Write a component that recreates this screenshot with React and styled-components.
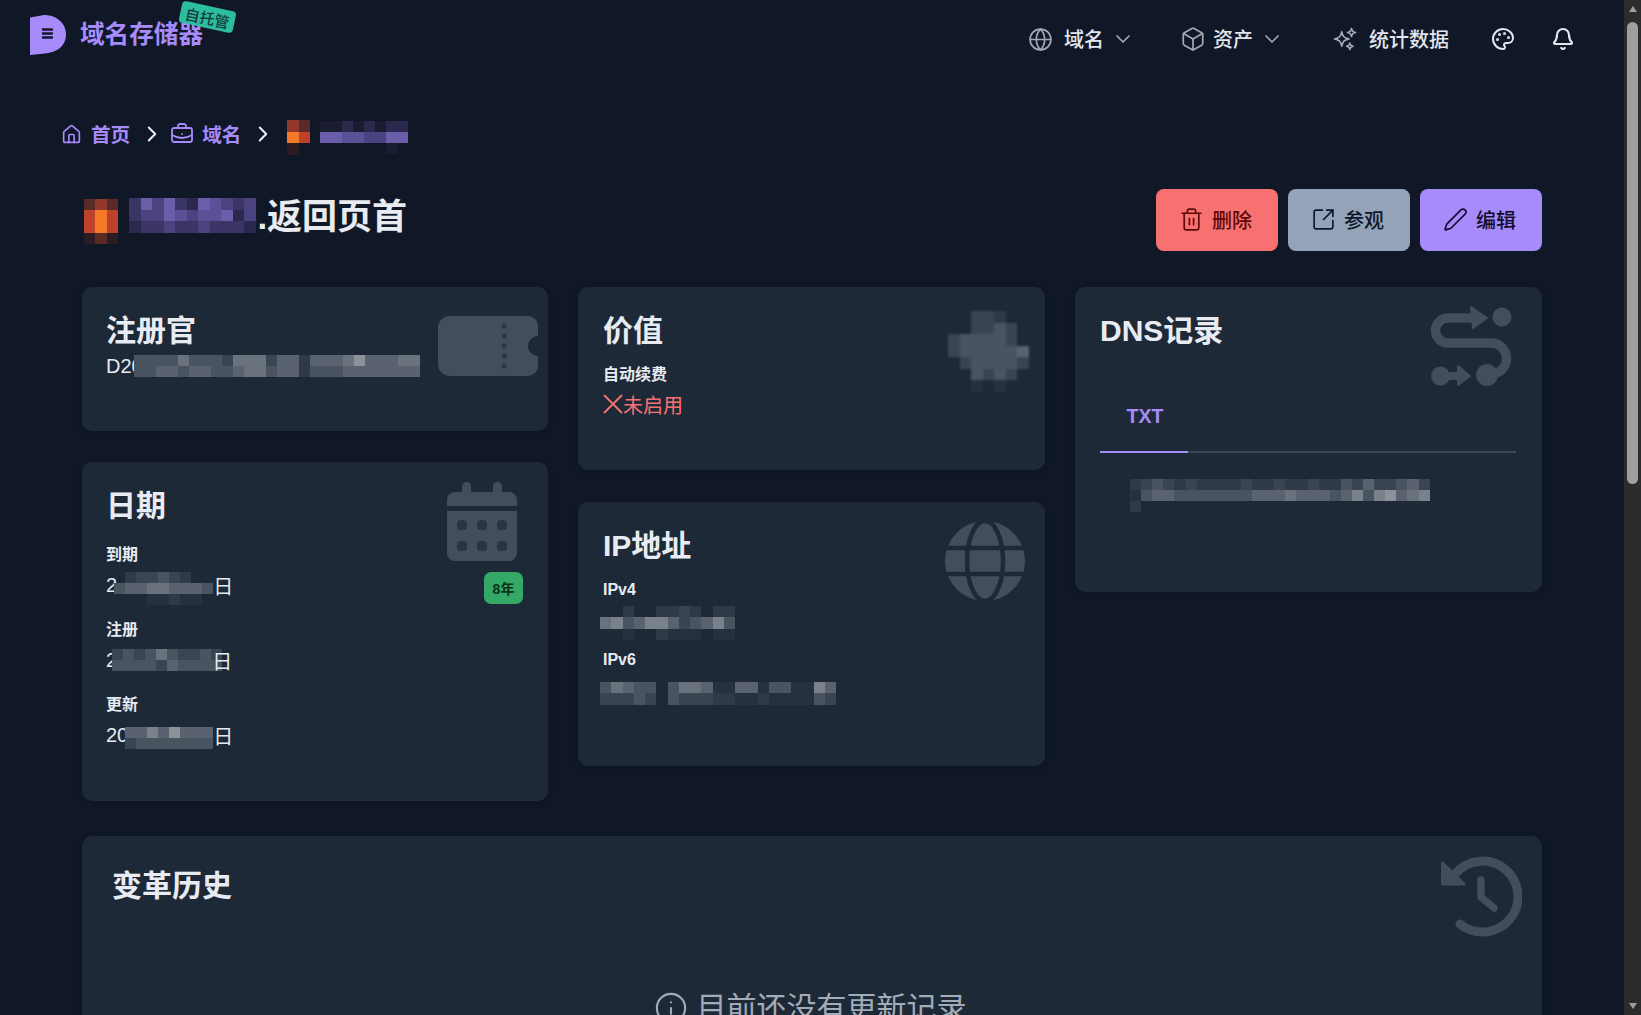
import React from "react";
import styled, { createGlobalStyle } from "styled-components";
import { Globe, ChevronDown, Box, Palette, Bell, House, ChevronRight, BriefcaseBusiness, Trash2, SquareArrowOutUpRight, Pen, X, Info } from "lucide-react";
import { HiOutlineSparkles } from "react-icons/hi2";

const FONT = `"Liberation Sans", "Noto Sans CJK SC", sans-serif`;
const BG = "#101726";
const CARD = "#1e2937";
const ICON = "#434d5b";

const Global = createGlobalStyle`
  html, body { margin: 0; padding: 0; height: 100%; overflow: hidden; background: ${BG}; }
  #root { height: 100%; }
  * { box-sizing: border-box; }
`;

const Page = styled.div`
  display: flex; width: 100%; height: 1015px; overflow: hidden;
  font-family: ${FONT}; color: #e5e9f0; background: ${BG};
`;
const Main = styled.main`
  flex: 1; min-width: 0; height: 100%; overflow: hidden; padding: 0 82px;
`;

/* scrollbar */
const ScrollTrack = styled.div`
  flex: none; width: 17px; height: 100%; background: #2c2c2c;
  display: flex; flex-direction: column; align-items: center; padding: 6px 0;
`;
const ArrowUp = styled.div`
  width: 0; height: 0; border-left: 4.5px solid transparent; border-right: 4.5px solid transparent;
  border-bottom: 6px solid #9f9f9f;
`;
const ArrowDown = styled.div`
  width: 0; height: 0; border-left: 4.5px solid transparent; border-right: 4.5px solid transparent;
  border-top: 6px solid #9f9f9f; margin-top: auto;
`;
const Thumb = styled.div`
  width: 11px; height: 462px; margin-top: 10px; border-radius: 6px; background: #9f9f9f;
`;

/* header */
const Header = styled.header`
  display: flex; align-items: center; justify-content: space-between;
  height: 78px; margin: 0 -33px 0 -52px;
`;
const Brand = styled.div`
  position: relative; display: flex; align-items: center; gap: 14px; align-self: flex-start; margin-top: 15px;
`;
const BrandName = styled.span`
  font-size: 24.6px; font-weight: 700; color: #a78bfa; line-height: 40px;
`;
const HostBadge = styled.span`
  position: absolute; left: 150px; top: -9px; width: 55px; height: 22px;
  display: flex; align-items: center; justify-content: center;
  background: #2bbd9e; color: #173b3b; font-size: 15px; font-weight: 500;
  border-radius: 4px; transform: rotate(12deg);
`;
const Nav = styled.nav`
  display: flex; align-items: center; font-size: 20px; color: #e2e6ee; font-weight: 500;
`;
const NavItem = styled.div`
  display: flex; align-items: center; gap: 7px; margin-left: ${(p) => p.$ml || 0}px;
  svg.lead { color: #a2a8b4; }
`;
const NavText = styled.span`
  margin-left: ${(p) => p.$ml || 0}px; margin-top: -1px;
`;

/* breadcrumb */
const Crumbs = styled.div`
  display: flex; align-items: center; height: 32px; margin: 40px 0 0 -21px;
  font-size: 19.6px; font-weight: 600; color: #a78bfa;
`;
const Crumb = styled.span`
  display: flex; align-items: center; gap: ${(p) => p.$gap}px;
`;
const CrumbText = styled.span`
  margin-top: -2px;
`;
const Sep = styled(ChevronRight)`
  color: #eef0f4; margin: 0 ${(p) => p.$mr}px 0 9px; flex: none;
`;

/* title */
const TitleRow = styled.div`
  display: flex; align-items: flex-start; justify-content: space-between; height: 62px; margin-top: 39px;
`;
const Title = styled.h1`
  margin: 0; display: flex; align-items: center; height: 48px; padding-left: 2px;
  font-size: 35px; font-weight: 700; color: #e8ebef;
`;
const Actions = styled.div`
  display: flex; gap: 10px;
`;
const Action = styled.button`
  width: 122px; height: 62px; border: 0; border-radius: 8px; padding: 0 3px 1px 0;
  display: flex; align-items: center; justify-content: center; gap: 8px;
  font-family: ${FONT}; font-size: 20px; font-weight: 500;
  background: ${(p) => p.$bg}; color: ${(p) => p.$fg};
`;

/* cards */
const Columns = styled.div`
  display: grid; grid-template-columns: 466px 467px 1fr; column-gap: 30px; align-items: start;
  margin-top: 36px; margin-bottom: 35px;
`;
const Column = styled.div`
  display: flex; flex-direction: column; gap: ${(p) => p.$gap}px;
`;
const Card = styled.section`
  position: relative; height: ${(p) => p.$h}px; padding: 26px 26px 26px ${(p) => p.$pl || 24}px;
  background: ${CARD}; border-radius: 10px; overflow: hidden;
  box-shadow: 0 2px 6px rgba(0,0,0,.12);
`;
const WideCard = styled(Card)`
  height: 400px; padding: 32px 30px;
`;
const CardTitle = styled.h2`
  margin: 0 0 ${(p) => p.$mb || 0}px; font-size: 30px; line-height: 36px; font-weight: 700; color: #e8ecf2;
`;
const Mark = styled.div`
  position: absolute; top: ${(p) => p.$top}px; right: ${(p) => p.$right}px; line-height: 0;
`;
const Label = styled.div`
  font-size: 16px; line-height: 24px; font-weight: 700; color: #e8ecf2; margin-bottom: ${(p) => p.$mb ?? 7}px;
`;
const Value = styled.div`
  display: flex; align-items: center; height: 28px; font-size: 20px; color: #e5e9f0;
  margin-top: ${(p) => p.$mt || 0}px; white-space: nowrap;
`;
const Field = styled.div`
  margin-bottom: ${(p) => p.$mb}px;
`;
const Off = styled(Value)`
  color: #f87171;
`;
const OffMark = styled(X)`
  flex: none; margin: -9px -7px -9px -7px;
`;
const YearBadge = styled.span`
  position: absolute; top: 110px; right: 25px; width: 39px; height: 32px;
  display: flex; align-items: center; justify-content: center;
  background: #34a866; color: #0d3319; border-radius: 7px; font-size: 14px; font-weight: 700;
`;
const Tabs = styled.div`
  display: flex; height: 57px; margin-top: 47px; border-bottom: 2px solid #3c4656;
`;
const Tab = styled.div`
  width: 88px; height: 57px; padding-left: 2px; display: flex; align-items: flex-start; justify-content: center;
  font-size: 19.5px; line-height: 40px; font-weight: 700; color: #a78bfa; border-bottom: 2px solid #a78bfa;
`;
const TabPanel = styled.div`
  margin: 26px 0 0 30px;
`;
const Empty = styled.div`
  display: flex; align-items: center; justify-content: center; gap: 9px; margin-top: 87px; padding-right: 4px;
  font-size: 30px; line-height: 30px; color: #a2abb8;
`;

/* mosaic */
const GRAY = { 1: "#263140", 2: "#2f3a48", 3: "#3a4553", 4: "#4a5461", 5: "#59626e", 6: "#69727d", 7: "#79818a", 8: "#8b9299", 9: "#9da3a9" };
const PURPLE = { 1: "#1a1c32", 2: "#2a284c", 3: "#3a3565", 4: "#4b4380", 5: "#5b5196", 6: "#6a5eab", 7: "#7869bf" };
const HOT = { a: "#2a1c22", b: "#5a2a26", c: "#92382a", d: "#bd4229", e: "#f4792a", f: "#f99a2e" };

const MosaicSvg = styled.svg`
  display: block; flex: none; overflow: visible;
  margin: ${(p) => p.$margin || 0};
  filter: ${(p) => (p.$soft ? "blur(1px)" : "none")};
`;
function Mosaic({ rows, cell = 11, palette = GRAY, margin, soft }) {
  const cols = Math.max(...rows.map((r) => r.length));
  return (
    <MosaicSvg $margin={margin} $soft={soft} width={cols * cell} height={rows.length * cell} viewBox={`0 0 ${cols * cell} ${rows.length * cell}`} shapeRendering="crispEdges">
      {rows.map((r, y) =>
        r.split("").map((c, x) =>
          palette[c] ? <rect key={`${x}-${y}`} x={x * cell} y={y * cell} width={cell} height={cell} fill={palette[c]} /> : null
        )
      )}
    </MosaicSvg>
  );
}

/* drawn marks */
const LogoMark = () => (
  <svg width="36" height="40" viewBox="0 0 36 40">
    <path d="M0 2.5 L14 0 C27 0 36 8.5 36 19.5 C36 31 27 37.5 15 38.5 L0 40 Z" fill="#a78bfa" />
    <path d="M13 14.5 H22 M13 18.5 H22 M13 22.5 H22" stroke="#15182c" strokeWidth="2.4" strokeLinecap="round" />
  </svg>
);
const TicketMark = () => (
  <svg width="100" height="60" viewBox="0 0 100 60">
    <path d="M12 0 H90 a10 10 0 0 1 10 10 V20 a10 10 0 0 0 0 20 V50 a10 10 0 0 1 -10 10 H12 a12 12 0 0 1 -12 -12 V12 a12 12 0 0 1 12 -12 Z" fill={ICON} />
    {[10, 20, 30, 40, 50].map((y) => (
      <rect key={y} x="64" y={y - 2.5} width="4.5" height="5" rx="1" fill="#2b3645" />
    ))}
  </svg>
);
const CalendarMark = () => (
  <svg width="70" height="79" viewBox="0 0 70 79">
    <rect x="15" y="0" width="9" height="16" rx="4.5" fill={ICON} />
    <rect x="46" y="0" width="9" height="16" rx="4.5" fill={ICON} />
    <path d="M8 10 H62 a8 8 0 0 1 8 8 V24 H0 V18 a8 8 0 0 1 8 -8 Z" fill={ICON} />
    <path d="M0 29 H70 V71 a8 8 0 0 1 -8 8 H8 a8 8 0 0 1 -8 -8 Z" fill={ICON} />
    {[15, 35, 55].flatMap((x) =>
      [43, 64].map((y) => <rect key={`${x}-${y}`} x={x - 5} y={y - 5} width="10" height="10" rx="3.5" fill="#2a3543" />)
    )}
  </svg>
);
const GlobeMark = () => (
  <svg width="80" height="80" viewBox="0 0 80 80">
    <circle cx="40" cy="40" r="40" fill={ICON} />
    <ellipse cx="40" cy="40" rx="18" ry="40" fill="none" stroke={CARD} strokeWidth="4.5" />
    <path d="M0 27 H80 M0 53 H80" stroke={CARD} strokeWidth="4.5" />
  </svg>
);
const RouteMark = () => (
  <svg width="81" height="81" viewBox="0 0 81 81">
    <path d="M44 12 H17 a12.5 12.5 0 0 0 0 25 H60 a15 15 0 0 1 0 31" fill="none" stroke={ICON} strokeWidth="9.5" />
    <path d="M40 1 L56 12 L42 22 Z" fill={ICON} stroke={ICON} strokeWidth="2" strokeLinejoin="round" />
    <circle cx="71" cy="11" r="9.5" fill={ICON} />
    <circle cx="9.5" cy="70" r="9.5" fill={ICON} />
    <path d="M12 70 H30" stroke={ICON} strokeWidth="8" />
    <path d="M27 60 L39 70 L27 79 Z" fill={ICON} stroke={ICON} strokeWidth="2" strokeLinejoin="round" />
    <circle cx="56" cy="69" r="11" fill={ICON} />
  </svg>
);
const HistoryMark = () => (
  <svg width="81" height="81" viewBox="0 0 81 81">
    <path d="M19 68 A35.5 35.5 0 1 0 15 17" fill="none" stroke={ICON} strokeWidth="9" strokeLinecap="round" />
    <path d="M1.5 7 V28 H23 Z" fill={ICON} stroke={ICON} strokeWidth="3" strokeLinejoin="round" />
    <path d="M40 24 V41 L53 52" fill="none" stroke={ICON} strokeWidth="7.5" strokeLinecap="round" strokeLinejoin="round" />
  </svg>
);

export default function App() {
  return (
    <Page>
      <Global />
      <Main>
        <Header>
          <Brand>
            <LogoMark />
            <BrandName>域名存储器</BrandName>
            <HostBadge>自托管</HostBadge>
          </Brand>
          <Nav>
            <NavItem>
              <Globe className="lead" size={25} strokeWidth={1.6} />
              <NavText $ml={4}>域名</NavText>
              <ChevronDown className="lead" size={24} strokeWidth={1.7} />
            </NavItem>
            <NavItem $ml={45}>
              <Box className="lead" size={26} strokeWidth={1.6} />
              <NavText>资产</NavText>
              <ChevronDown className="lead" size={24} strokeWidth={1.7} />
            </NavItem>
            <NavItem $ml={48}>
              <HiOutlineSparkles className="lead" size={26} />
              <NavText $ml={4}>统计数据</NavText>
            </NavItem>
            <NavItem $ml={42}>
              <Palette size={24} strokeWidth={2} />
            </NavItem>
            <NavItem $ml={36}>
              <Bell size={24} strokeWidth={2.2} />
            </NavItem>
          </Nav>
        </Header>

        <Crumbs>
          <Crumb $gap={9}><House size={21} strokeWidth={1.9} /><CrumbText>首页</CrumbText></Crumb>
          <Sep $mr={5} size={26} strokeWidth={1.8} />
          <Crumb $gap={8}><BriefcaseBusiness size={24} strokeWidth={1.8} /><CrumbText>域名</CrumbText></Crumb>
          <Sep $mr={11} size={26} strokeWidth={1.8} />
          <Mosaic palette={HOT} cell={11.5} margin="6px 10px 0 0" rows={["cb", "ed", "a."]} />
          <Mosaic palette={PURPLE} margin="6px 0 0 0" rows={["11212122", "66554466", "......1."]} />
        </Crumbs>

        <TitleRow>
          <Title>
            <Mosaic palette={HOT} cell={11.3} margin="18px 11px 0 0" rows={["bcb", "ded", "ded", "aba"]} />
            <Mosaic palette={PURPLE} cell={11.5} margin="4px 2px 0 0" rows={["36463265434", "34465455624", "23343343332"]} />
            .返回页首
          </Title>
          <Actions>
            <Action $bg="#f87171" $fg="#5f0909"><Trash2 size={25} strokeWidth={1.6} />删除</Action>
            <Action $bg="#94a3b8" $fg="#0f172a"><SquareArrowOutUpRight size={25} strokeWidth={1.6} />参观</Action>
            <Action $bg="#a78bfa" $fg="#120c2e"><Pen size={25} strokeWidth={1.6} />编辑</Action>
          </Actions>
        </TitleRow>

        <Columns>
          <Column $gap={31}>
            <Card $h={144}>
              <CardTitle>注册官</CardTitle>
              <Value $mt={3}>
                D20
                <Mosaic margin="0 0 0 -9px" rows={["44446444366635525556855566", "44554554456645524445555555"]} />
              </Value>
              <Mark $top={29} $right={10}><TicketMark /></Mark>
            </Card>
            <Card $h={339}>
              <CardTitle $mb={19}>日期</CardTitle>
              <Field $mb={19}>
                <Label $mb={4}>到期</Label>
                <Value>2<Mosaic margin="6px 0 0 -3px" rows={[".233432..", "455665554", "...11211."]} />日</Value>
              </Field>
              <Field $mb={19}>
                <Label $mb={4}>注册</Label>
                <Value>2<Mosaic margin="0 -10px 0 -5px" rows={["3434643343", "4444354444"]} />日</Value>
              </Field>
              <Field $mb={19}>
                <Label $mb={4}>更新</Label>
                <Value>20<Mosaic margin="6px 0 0 -3px" rows={["55758555", "34444444"]} />日</Value>
              </Field>
              <Mark $top={20} $right={31}><CalendarMark /></Mark>
              <YearBadge>8年</YearBadge>
            </Card>
          </Column>

          <Column $gap={32}>
            <Card $h={183} $pl={25}>
              <CardTitle $mb={14}>价值</CardTitle>
              <Label>自动续费</Label>
              <Off $mt={-4}><OffMark size={34} strokeWidth={1.3} />未启用</Off>
              <Mark $top={24} $right={17}>
                <Mosaic soft cell={11.5} rows={["..332..", "..3343.", "344443.", "3444445", ".344443", "..4343.", "..1.1.."]} />
              </Mark>
            </Card>
            <Card $h={264} $pl={25}>
              <CardTitle $mb={14}>IP地址</CardTitle>
              <Field $mb={11}>
                <Label>IPv4</Label>
                <Value>
                  <Mosaic margin="0 0 0 -3px" rows={["..2..2232.22", "674577534574", "..1..2111.11"]} cell={11.25} />
                </Value>
              </Field>
              <Field $mb={11}>
                <Label>IPv6</Label>
                <Value>
                  <Mosaic margin="0 0 0 -3px" cell={11.25} rows={["46544.466511551441175", "33343.433322112111143"]} />
                </Value>
              </Field>
              <Mark $top={19} $right={20}><GlobeMark /></Mark>
            </Card>
          </Column>

          <Column $gap={0}>
            <Card $h={305} $pl={25}>
              <CardTitle>DNS记录</CardTitle>
              <Tabs><Tab>TXT</Tab></Tabs>
              <TabPanel>
                <Mosaic cell={11.1} rows={["234323222232232232243533453", "145544444445556555457478567", "2.........................."]} />
              </TabPanel>
              <Mark $top={19} $right={30}><RouteMark /></Mark>
            </Card>
          </Column>
        </Columns>

        <WideCard>
          <CardTitle>变革历史</CardTitle>
          <Empty><Info size={34} strokeWidth={1.5} />目前还没有更新记录</Empty>
          <Mark $top={20} $right={20}><HistoryMark /></Mark>
        </WideCard>
      </Main>
      <ScrollTrack>
        <ArrowUp />
        <Thumb />
        <ArrowDown />
      </ScrollTrack>
    </Page>
  );
}
